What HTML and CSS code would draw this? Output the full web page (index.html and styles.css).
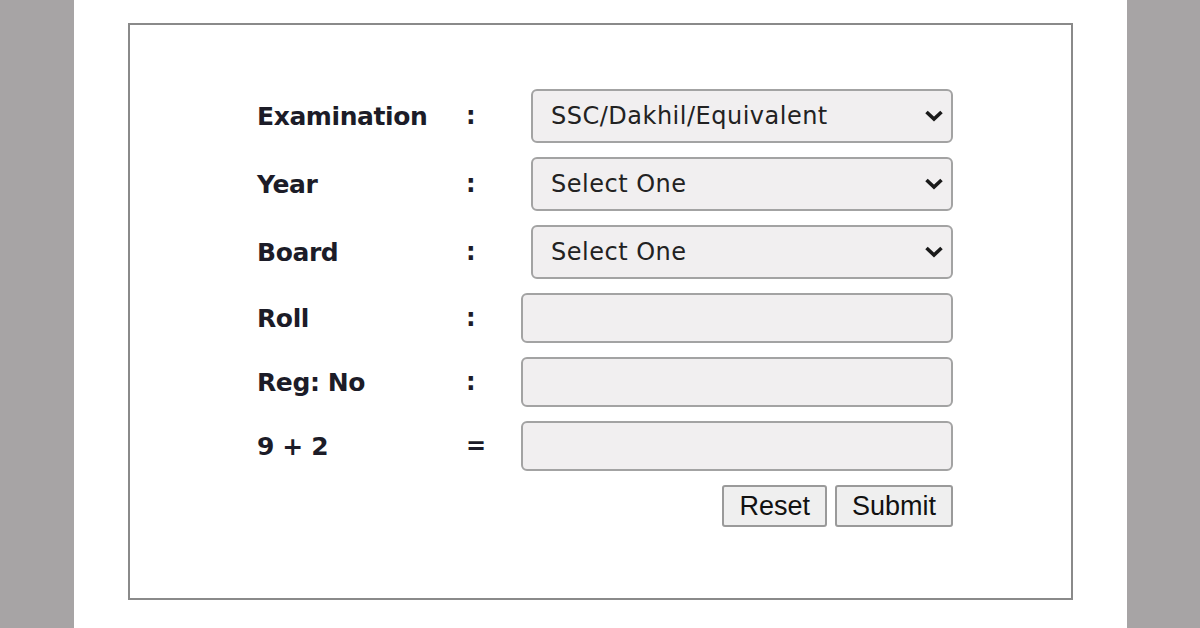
FILE: index.html
```html
<!DOCTYPE html>
<html lang="en">
<head>
    <meta charset="utf-8">
    <title>Result Search</title>
    <link rel="stylesheet" href="styles.css">
</head>
<body>
<div id="page">
    <div id="box">
        <form id="form" onsubmit="return false;">
            <div class="row sel-row">
                <label class="lbl">Examination</label>
                <span class="sep">:</span>
                <div class="select-wrap">
                    <select class="field">
                        <option>SSC/Dakhil/Equivalent</option>
                    </select>
                    <svg class="chev" width="20" height="12" viewBox="0 0 20 12"><path d="M2.5 2 L10 9 L17.5 2" fill="none" stroke="#1a1a1a" stroke-width="3.6"/></svg>
                </div>
            </div>
            <div class="row sel-row">
                <label class="lbl">Year</label>
                <span class="sep">:</span>
                <div class="select-wrap">
                    <select class="field">
                        <option>Select One</option>
                    </select>
                    <svg class="chev" width="20" height="12" viewBox="0 0 20 12"><path d="M2.5 2 L10 9 L17.5 2" fill="none" stroke="#1a1a1a" stroke-width="3.6"/></svg>
                </div>
            </div>
            <div class="row sel-row">
                <label class="lbl">Board</label>
                <span class="sep">:</span>
                <div class="select-wrap">
                    <select class="field">
                        <option>Select One</option>
                    </select>
                    <svg class="chev" width="20" height="12" viewBox="0 0 20 12"><path d="M2.5 2 L10 9 L17.5 2" fill="none" stroke="#1a1a1a" stroke-width="3.6"/></svg>
                </div>
            </div>
            <div class="row inp-row">
                <label class="lbl">Roll</label>
                <span class="sep">:</span>
                <input type="text" class="field input">
            </div>
            <div class="row inp-row">
                <label class="lbl">Reg: No</label>
                <span class="sep">:</span>
                <input type="text" class="field input">
            </div>
            <div class="row inp-row">
                <label class="lbl">9 + 2</label>
                <span class="sep">=</span>
                <input type="text" class="field input">
            </div>
            <div class="buttons">
                <input type="reset" class="btn" value="Reset">
                <input type="submit" class="btn" value="Submit">
            </div>
        </form>
    </div>
</div>
</body>
</html>
```

FILE: styles.css
```css
html, body {
    margin: 0;
    padding: 0;
    height: 100%;
    overflow: hidden;
}

body {
    background: #a7a4a5;
}

#page {
    width: 1053px;
    height: 628px;
    margin-left: 74px;
    background: #ffffff;
    padding-top: 23px;
    box-sizing: border-box;
}

#box {
    width: 945px;
    height: 577px;
    margin-left: 54px;
    border: 2px solid #8a8a8a;
    box-sizing: border-box;
    padding: 64px 0 0 127px;
}

.row {
    display: grid;
    grid-template-columns: 198px 66px 432px;
    align-items: center;
}

.sel-row {
    height: 54px;
    margin-bottom: 14px;
}

.inp-row {
    height: 50px;
    margin-bottom: 14px;
}

.lbl {
    font-family: "DejaVu Sans", Verdana, sans-serif;
    font-weight: bold;
    font-size: 25px;
    letter-spacing: -0.4px;
    color: #1c1c28;
}

.sep {
    font-family: "DejaVu Sans", Verdana, sans-serif;
    font-weight: bold;
    font-size: 24px;
    color: #1c1c28;
    padding-left: 11px;
}

.field {
    box-sizing: border-box;
    background: #f1eff0;
    border: 2px solid #a3a3a3;
    border-radius: 6px;
    outline: none;
}

.select-wrap {
    position: relative;
    margin-left: 10px;
    height: 54px;
}

.select-wrap select {
    appearance: none;
    -webkit-appearance: none;
    width: 422px;
    height: 54px;
    padding: 0 0 0 18px;
    font-family: "DejaVu Sans", Verdana, sans-serif;
    font-size: 24px;
    letter-spacing: 0.5px;
    color: #222222;
}

.chev {
    position: absolute;
    right: 9px;
    top: 21px;
}

.input {
    width: 432px;
    height: 50px;
}

.buttons {
    display: flex;
    justify-content: flex-end;
    gap: 8px;
    width: 696px;
}

.btn {
    font-family: "Liberation Sans", Arial, sans-serif;
    font-size: 27px;
    color: #111111;
    background: #efefef;
    border: 2px solid #9a9a9a;
    border-radius: 3px;
    height: 42px;
    padding: 0 15px;
}
```
